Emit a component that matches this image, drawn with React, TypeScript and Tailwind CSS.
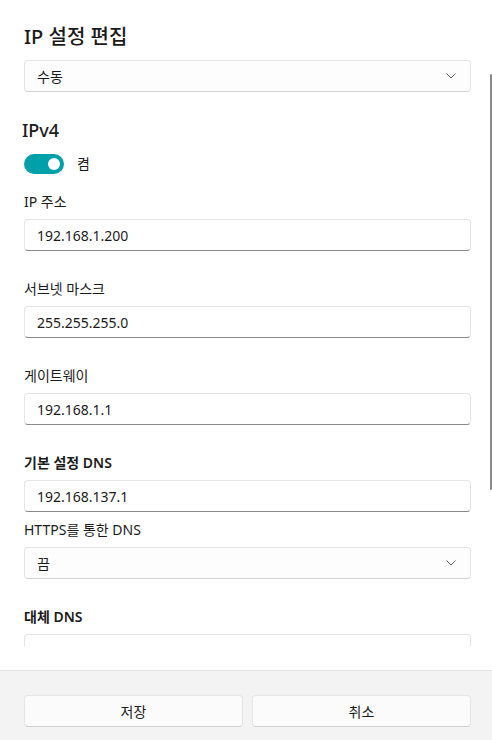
import React from "react";

const FONT = {
  fontFamily: '"Segoe UI", "Noto Sans", "Noto Sans CJK KR", sans-serif',
};

function Chevron() {
  return (
    <svg width="10" height="6" viewBox="0 0 10 6" fill="none" className="text-[#5f5f5f]">
      <path d="M0.8 0.8 L5 5 L9.2 0.8" stroke="currentColor" strokeWidth="1" strokeLinecap="round" strokeLinejoin="round" />
    </svg>
  );
}

function Select({ value }: { value: string }) {
  return (
    <div className="flex h-8 items-center justify-between rounded-[4px] border border-[#e5e5e5] border-b-[#d4d4d4] bg-[#fdfdfd] pl-3 pr-[14px] text-[14px] text-[#1b1b1b]">
      <span>{value}</span>
      <Chevron />
    </div>
  );
}

function Input({ value }: { value: string }) {
  return (
    <div className="flex h-8 items-center rounded-[4px] border border-[#e5e5e5] border-b-[#8a8a8a] bg-white pl-3 text-[14px] text-[#1b1b1b]">
      {value}
    </div>
  );
}

const FIELDS = [
  { label: "IP 주소", value: "192.168.1.200" },
  { label: "서브넷 마스크", value: "255.255.255.0" },
  { label: "게이트웨이", value: "192.168.1.1" },
];

export default function App() {
  return (
    <div className="relative flex h-[740px] w-[492px] flex-col overflow-hidden bg-white" style={FONT}>
      <div className="h-[670px] pb-6">
        <div className="h-full overflow-hidden pl-6 pr-[21px] pt-[23px]">
          <h1 className="text-[20px] leading-7 font-medium text-[#1b1b1b]">IP 설정 편집</h1>
          <div className="mt-[9px]">
            <Select value="수동" />
          </div>

          <h2 className="mt-[26px] -ml-[2px] text-[18px] leading-6 font-medium text-[#1b1b1b]">IPv4</h2>
          <div className="mt-[11px] flex items-center gap-[13px]">
            <div className="flex h-5 w-10 items-center justify-end rounded-full bg-[#00a0aa] pr-[4px]">
              <div className="h-3 w-3 rounded-full bg-white" />
            </div>
            <span className="text-[14px] text-[#1b1b1b]">켬</span>
          </div>

          <div className="mt-[18px] flex flex-col">
            {FIELDS.map((f, i) => (
              <div key={f.label} className={i === 0 ? "" : "mt-[28px]"}>
                <div className="mb-[7px] h-5 text-[14px] leading-5 text-[#1b1b1b]">{f.label}</div>
                <Input value={f.value} />
              </div>
            ))}
            <div className="mt-[28px]">
              <div className="mb-[7px] h-5 text-[14px] leading-5 font-semibold text-[#1b1b1b]">기본 설정 DNS</div>
              <Input value="192.168.137.1" />
            </div>
            <div className="mt-[8px]">
              <div className="mb-[7px] h-5 text-[14px] leading-5 text-[#1b1b1b]">HTTPS를 통한 DNS</div>
              <Select value="끔" />
            </div>
            <div className="mt-[28px]">
              <div className="mb-[7px] h-5 text-[14px] leading-5 font-semibold text-[#1b1b1b]">대체 DNS</div>
              <Input value="" />
            </div>
          </div>
        </div>
      </div>

      <div className="flex flex-1 gap-[9px] border-t border-[#e5e5e5] bg-[#f3f3f3] pl-6 pr-[21px] pt-[24px]">
        <button className="flex h-8 flex-1 items-center justify-center rounded-[4px] border border-[#e5e5e5] border-b-[#d0d0d0] bg-[#fbfbfb] text-[14px] text-[#1b1b1b]">
          저장
        </button>
        <button className="flex h-8 flex-1 items-center justify-center rounded-[4px] border border-[#e5e5e5] border-b-[#d0d0d0] bg-[#fbfbfb] text-[14px] text-[#1b1b1b]">
          취소
        </button>
      </div>

      <div className="absolute right-0 top-[74px] h-[416px] w-[2px] rounded-full bg-[#8a8a8a]" />
    </div>
  );
}
